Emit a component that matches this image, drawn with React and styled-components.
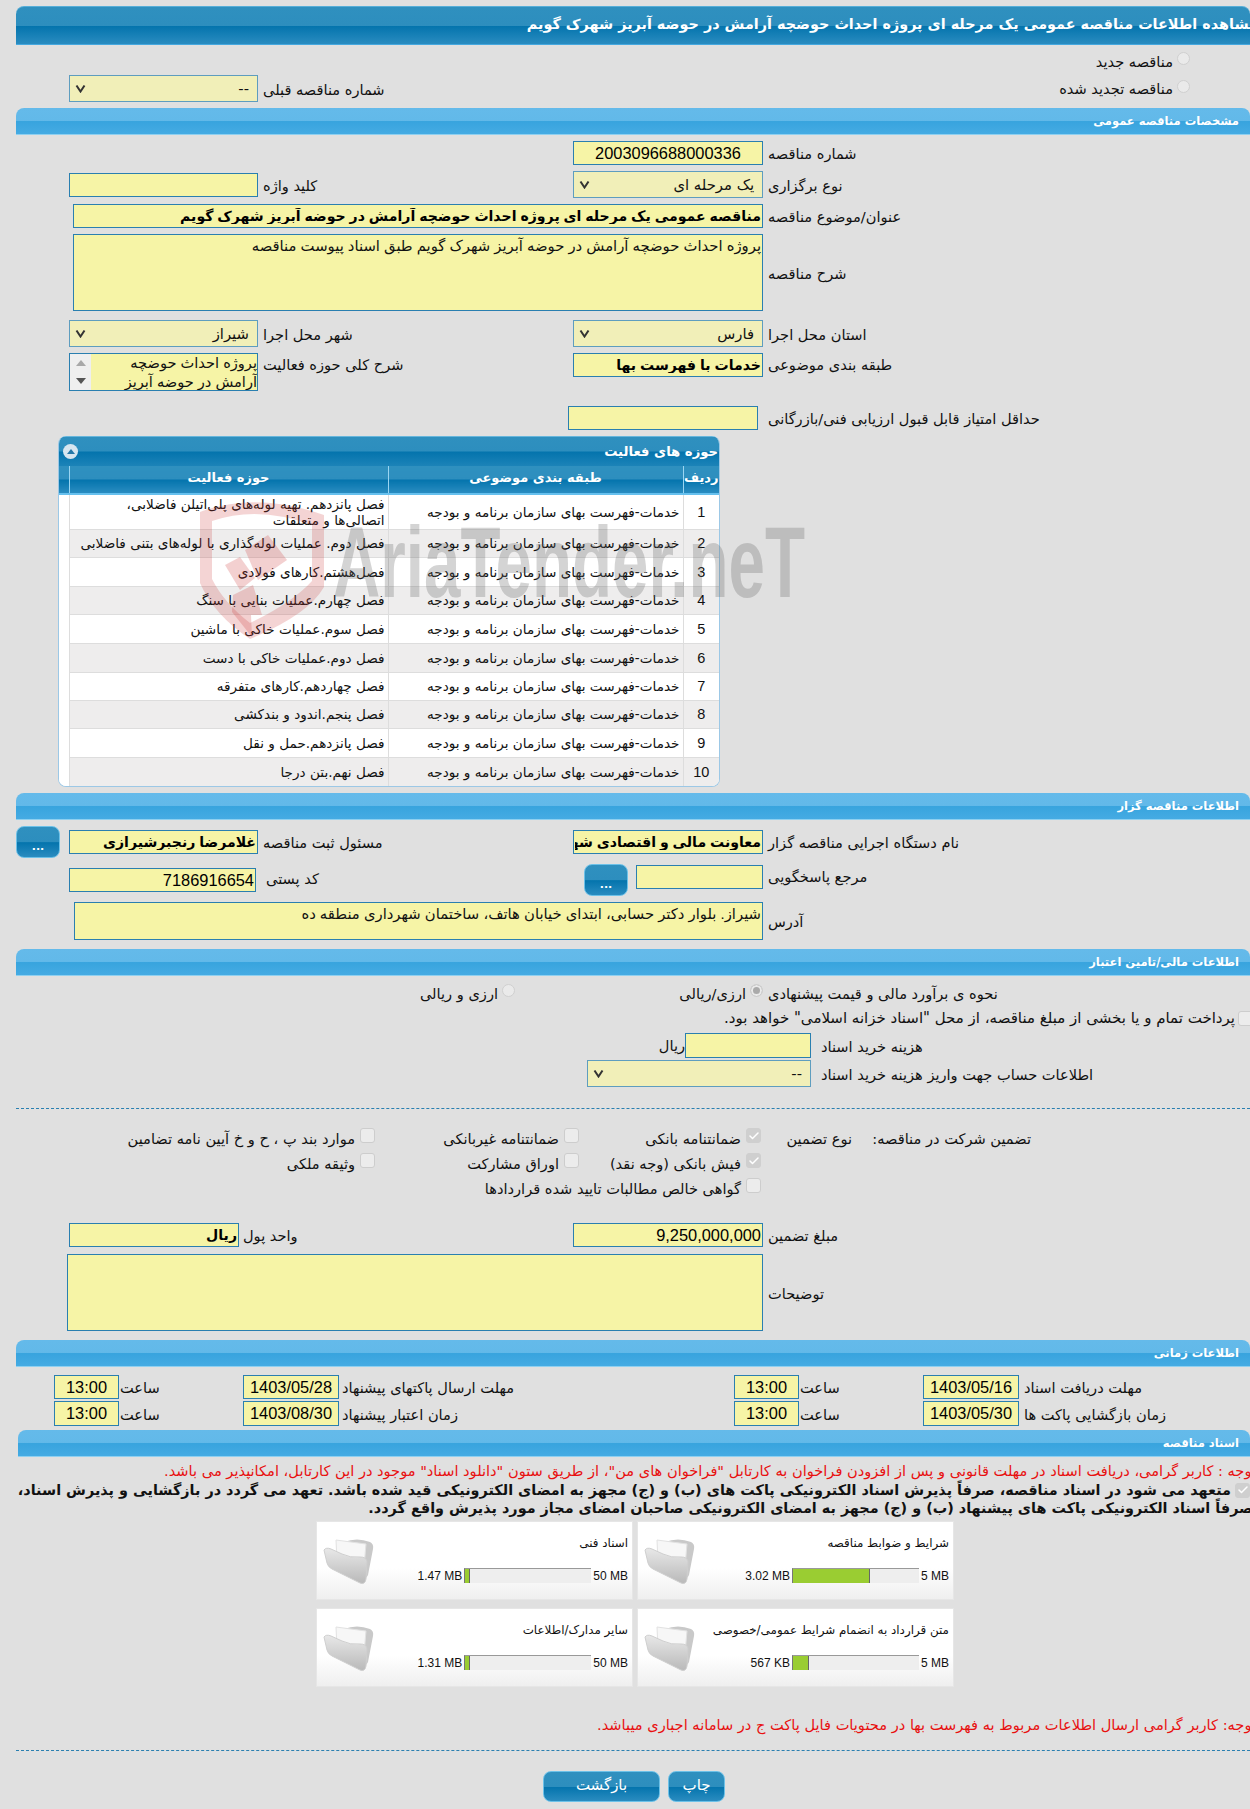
import React from "react";
import styled, { createGlobalStyle } from "styled-components";
import { Check } from "lucide-react";

const GlobalStyle = createGlobalStyle`
  html, body { margin: 0; padding: 0; background: #e0e0e0; }
  body { width: 1250px; height: 1809px; overflow: hidden; font-family: "DejaVu Sans", Tahoma, sans-serif; color: #111; }
  * { box-sizing: border-box; }
`;

const FONT = `"Liberation Sans", "DejaVu Sans", sans-serif`;

const Page = styled.div`
  position: relative; width: 1250px; height: 1809px; padding-left: 16px;
  overflow: hidden; direction: rtl; font-size: 14.6px;
`;
const TitleBar = styled.div`
  margin-top: 6px; height: 39px; display: flex; align-items: center; overflow: hidden; white-space: nowrap;
  border-radius: 8px 8px 0 0; color: #fff; font-weight: bold; font-size: 14.4px; padding-bottom: 3px;
  border-top: 1px solid #56aed8; border-bottom: 1px solid #45a8df;
  background: linear-gradient(#2f90bf 0, #2d8ebe 50%, #0474ad 52%, #2a8cc0 100%);
`;
const TitleText = styled.span` margin-right: -8px; `;
const SectionBar = styled.div`
  margin-top: ${p => p.$mt}px; margin-left: ${p => p.$ml || 0}px; height: 27px; display: flex; align-items: center;
  padding: 0 11px 0 0; border-radius: 8px 8px 0 0; color: #fff; font-weight: bold; font-size: 11.5px;
  border-bottom: 1px solid #8fd0f0;
  background: linear-gradient(#64baea 0, #62b9e9 48%, #38a4de 52%, #45abe3 100%);
`;
const Row = styled.div`
  display: grid; grid-template-columns: ${p => p.$cols || "487px 190px 315px 189px 53px"};
  margin-top: ${p => p.$mt}px; height: ${p => p.$h}px; align-items: ${p => p.$align || "center"};
`;
const Label = styled.label`
  text-align: left; white-space: nowrap; padding-left: ${p => p.$pl ?? 5}px; padding-top: ${p => p.$pt ?? 1}px;
`;
const Input = styled.input`
  display: block; width: ${p => p.$w}px; height: ${p => p.$hh || 24}px; margin-right: ${p => p.$mr || 0}px; margin-top: ${p => p.$mtop || 0}px; padding: 0 1px;
  background: #f6f4a6; border: 1px solid #2a7fb0; color: #000; outline: none; direction: rtl;
  font: ${p => (p.$bold ? "bold" : "normal")} ${p => p.$fs || 16.4}px ${FONT};
  text-align: ${p => p.$center ? "center" : "right"};
  grid-column: ${p => p.$span ? `2 / span ${p.$span}` : "auto"};
`;
const Area = styled.textarea`
  display: block; width: ${p => p.$w}px; height: ${p => p.$hh}px; padding: 2px 1px 0; resize: none; overflow: hidden;
  background: #f6f4a6; border: 1px solid #2a7fb0; color: #111; outline: none; direction: rtl;
  font: 14.8px ${FONT};
  grid-column: 2 / span 4;
`;
const Select = styled.div`
  display: flex; justify-content: space-between; align-items: center; height: 27px; width: ${p => p.$w || 190}px;
  padding: 0 8px 0 5px; background: #f1efb8; border: 1px solid #5e9dbf; font-size: 14.8px;
`;
const Arrow = () => (
  <svg width="11" height="9" viewBox="0 0 11 9"><path d="M1.5 1.5 L5.5 7.5 L9.5 1.5" fill="none" stroke="#333" strokeWidth="2" /></svg>
);
const RadioCell = styled.div`
  display: flex; align-items: center; gap: 4px; padding-right: ${p => p.$pr || 0}px; white-space: nowrap;
`;
const Radio = styled.span`
  display: inline-block; flex: none; width: 13px; height: 13px; margin-bottom: 5px; border-radius: 50%; border: 1px solid #d0d0d0; background: #eaeaea;
  ${p => p.$on && "box-shadow: inset 0 0 0 2px #eaeaea; background: #aaa;"}
`;
const Box = styled.span`
  display: inline-flex; flex: none; align-items: center; justify-content: center; width: 15px; height: 15px;
  border-radius: 3px; background: ${p => p.$on ? "#cfcfcf" : "#ececec"}; border: 1px solid ${p => p.$on ? "#cfcfcf" : "#cdcdcd"};
`;
const Listbox = styled.div`
  display: flex; width: 189px; height: 38px; border: 1px solid #2a7fb0; background: #f6f4a6; overflow: hidden;
`;
const ListText = styled.div` flex: 1; font: 14.6px/19px ${FONT}; white-space: pre-line; color: #111; `;
const ScrollTrack = styled.div`
  flex: none; width: 21px; background: #efefef; display: flex; flex-direction: column; align-items: center; justify-content: space-around;
`;
const Tri = styled.span`
  width: 0; height: 0; border-left: 5px solid transparent; border-right: 5px solid transparent;
  ${p => p.$up ? "border-bottom: 6px solid #a8a8a8;" : "border-top: 6px solid #555;"}
`;
const glossy = `
  background: linear-gradient(#2f90bf 0, #2d8ebe 50%, #0474ad 52%, #2a8cc0 100%);
  border: 1px solid #6cc1e8; border-radius: 8px; color: #fff; font-family: "DejaVu Sans", sans-serif;
`;
const DotsButton = styled.button`
  ${glossy} width: 44px; height: 32px; padding: 8px 0 0; font-size: 11px; font-weight: bold; justify-self: end;
`;
const InlineGroup = styled.div` display: flex; gap: 8px; align-items: ${p => p.$align || "flex-start"}; `;
const Panel = styled.section`
  margin: 6px 530px 0 0; width: 662px; height: 351px;
  border: 1px solid #9cc8e6; border-top: 0; border-radius: 8px; overflow: hidden; background: #fff;
`;
const PanelTitle = styled.div`
  display: flex; justify-content: space-between; align-items: center; height: 30px; padding: 0 1px 0 4px; color: #fff; font-weight: bold; font-size: 13.2px;
  background: linear-gradient(#2f90bf 0, #2d8ebe 48%, #0474ad 52%, #1c83b8 100%);
  border-top: 1px solid #67b6dc;
`;
const Collapse = styled.span`
  width: 15px; height: 15px; border-radius: 50%; background: #d7e6f0; display: flex; align-items: center; justify-content: center;
  &::after { content: ""; border-left: 4px solid transparent; border-right: 4px solid transparent; border-bottom: 5px solid #2578a8; }
`;
const Table = styled.table`
  width: 660px; border-collapse: collapse; table-layout: fixed;
`;
const Th = styled.th`
  width: ${p => p.$w}px; height: 28px; padding: 0 0 4px; color: #fff; font-size: 13px; border-left: 1px solid #9ad5f2;
  background: linear-gradient(#2f90bf 0, #2d8ebe 48%, #0474ad 52%, #2a8cc0 100%); border-bottom: 2px solid #66c0ee;
  &:last-child { border-left: 0; }
`;
const Tr = styled.tr`
  height: ${p => p.$h}px;
  & > td { background: ${p => p.$alt ? "#eeeded" : "#fff"}; }
  & > td:last-child { background: #fff; border: 0; }
`;
const Td = styled.td`
  padding: 0 3px; border-left: 1px solid #ddd; border-bottom: 1px solid #ddd; line-height: 16px; white-space: pre-line;
  text-align: ${p => p.$center ? "center" : "right"};
  font-family: ${p => p.$center ? FONT : "inherit"}; font-size: ${p => p.$center ? "14.5px" : "13.6px"};
`;
const TextRow = styled.div`
  margin-top: ${p => p.$mt}px; height: ${p => p.$h}px; display: flex; align-items: center; gap: ${p => p.$gap || 0}px;
  margin-right: ${p => p.$mr || 0}px; white-space: nowrap; font-size: ${p => p.$fs || 14.6}px;
  color: ${p => p.$color || "inherit"}; font-weight: ${p => p.$bold ? "bold" : "normal"};
`;
const Divider = styled.div`
  margin-top: ${p => p.$mt}px; height: 1px; border-top: 1px dashed #2a7fb0;
`;
const CheckItem = styled.div`
  display: flex; align-items: flex-start; gap: 5px; white-space: nowrap;
`;
const CheckText = styled.span` padding-top: 2px; padding-right: ${p => p.$pr || 0}px; white-space: nowrap; `;
const Cards = styled.div`
  margin: 4px 296px 0 0; width: 638px; display: grid; grid-template-columns: 317px 317px; grid-auto-rows: 79px; gap: 8px 4px;
`;
const Card = styled.div`
  display: flex; justify-content: space-between; padding: 0 4px 0 3px; background: linear-gradient(#fff 0, #fff 60%, #efefef 100%);
  border: 1px solid #e6e6e6; font-size: 11.9px;
`;
const CardBody = styled.div` flex: 1; `;
const CardTitle = styled.div` margin-top: 14px; height: 18px; white-space: nowrap; `;
const Meter = styled.div`
  margin-top: 14px; display: flex; align-items: center; gap: 2px; justify-content: flex-start; font: 12px ${FONT}; white-space: nowrap;
`;
const Amount = styled.span` direction: ltr; unicode-bidi: isolate; `;
const Track = styled.div`
  width: 127px; height: 15px; flex: none; background: #eee; border-top: 1px solid #999; direction: ltr;
  border-left: 1px solid #777; display: flex;
`;
const Fill = styled.div`
  height: 100%; background: #9acd32; border-right: 1px solid #666;
`;
const FolderWrap = styled.div` flex: none; width: 56px; padding-top: 15px; `;
const Folder = () => (
  <svg width="54" height="48" viewBox="0 0 54 48">
    <defs>
      <linearGradient id="fg" x1="0" y1="0" x2="0" y2="1"><stop offset="0" stopColor="#e8e8e8" /><stop offset="1" stopColor="#b9b9b9" /></linearGradient>
    </defs>
    <path d="M22 5 Q35 0 48 5 Q52 7 51 12 L46 38 Q44 43 41 40 Z" fill="#c9c9c9" />
    <path d="M14 3 L44 7 L42 30 L15 24 Z" fill="#f7f7f7" stroke="#e2e2e2" />
    <path d="M2 13 Q4 10 9 12 L20 17 Q28 21 38 20 Q44 20 45 24 L44 42 Q43 48 38 46 L10 32 Q6 30 5 26 Z" fill="url(#fg)" stroke="#cfcfcf" />
  </svg>
);
const Actions = styled.div`
  margin-top: 20px; display: flex; gap: 8px; padding-right: 525px;
`;
const ActionButton = styled.button`
  ${glossy} width: ${p => p.$w}px; height: 31px; font-size: 15px; padding: 0 0 3px;
`;
const WatermarkText = styled.div`
  position: absolute; left: 333px; top: 512px; direction: ltr; color: rgba(95, 95, 95, 0.27);
  font: bold 100px/100px ${FONT}; transform-origin: left top; transform: scaleX(0.655); white-space: nowrap; pointer-events: none;
`;
const WatermarkLogo = styled.svg`
  position: absolute; left: 196px; top: 497px; pointer-events: none;
`;
const Unit = styled.span` margin-right: -8px; `;

const rowsData = [
  ["فصل پانزدهم. تهیه لوله‌های پلی‌اتیلن فاضلابی،\nاتصالی‌ها و متعلقات", 35],
  ["فصل دوم. عملیات لوله‌گذاری با لوله‌های بتنی فاضلابی", 28],
  ["فصل‌هشتم.کارهای فولادی", 29],
  ["فصل چهارم.عملیات بنایی با سنگ", 28],
  ["فصل سوم.عملیات خاکی با ماشین", 29],
  ["فصل دوم.عملیات خاکی با دست", 29],
  ["فصل چهاردهم.کارهای متفرقه", 28],
  ["فصل پنجم.اندود و بندکشی", 28],
  ["فصل پانزدهم.حمل و نقل", 29],
  ["فصل نهم.بتن درجا", 29],
];
const CATEGORY = "خدمات-فهرست بهای سازمان برنامه و بودجه";

const docs = [
  ["شرایط و ضوابط مناقصه", "3.02 MB", "5 MB", 61],
  ["اسناد فنی", "1.47 MB", "50 MB", 4],
  ["متن قرارداد به انضمام شرایط عمومی/خصوصی", "567 KB", "5 MB", 13],
  ["سایر مدارک/اطلاعات", "1.31 MB", "50 MB", 4],
];

const CheckField = ({ on, children }) => (
  <CheckItem>
    <Box $on={on}>{on && <Check size={12} color="#fff" strokeWidth={3} />}</Box>
    <CheckText>{children}</CheckText>
  </CheckItem>
);

const TIME_COLS = "231px 96px 124px 65px 395px 96px 124px 65px 38px";
const GUARANTEE_COLS = "398px 91px 182px 204px 359px";

export default function App() {
  return (
    <Page>
      <GlobalStyle />
      <TitleBar><TitleText>مشاهده اطلاعات مناقصه عمومی یک مرحله ای پروژه احداث حوضچه آرامش در حوضه آبریز شهرک گویم</TitleText></TitleBar>

      <Row $mt={7} $h={16}>
        <RadioCell $pr={60}><Radio />مناقصه جدید</RadioCell>
      </Row>
      <Row $mt={7} $h={27}>
        <RadioCell $pr={60}><Radio />مناقصه تجدید شده</RadioCell>
        <span />
        <Label>شماره مناقصه قبلی</Label>
        <Select $w={189}>--<Arrow /></Select>
      </Row>

      <SectionBar $mt={6}>مشخصات مناقصه عمومی</SectionBar>
      <Row $mt={6} $h={24}>
        <Label>شماره مناقصه</Label>
        <Input readOnly $w={190} $center value="2003096688000336" />
      </Row>
      <Row $mt={6} $h={27}>
        <Label>نوع برگزاری</Label>
        <Select>یک مرحله ای<Arrow /></Select>
        <Label>کلید واژه</Label>
        <Input readOnly $w={189} value="" />
      </Row>
      <Row $mt={6} $h={24}>
        <Label>عنوان/موضوع مناقصه</Label>
        <Input readOnly $w={690} $bold $fs={14.1} $span={4} value="مناقصه عمومی یک مرحله ای پروژه احداث حوضچه آرامش در حوضه آبریز شهرک گویم" />
      </Row>
      <Row $mt={6} $h={77}>
        <Label>شرح مناقصه</Label>
        <Area readOnly $w={690} $hh={77} value="پروژه احداث حوضچه آرامش در حوضه آبریز شهرک گویم طبق اسناد پیوست مناقصه" />
      </Row>
      <Row $mt={9} $h={27}>
        <Label>استان محل اجرا</Label>
        <Select>فارس<Arrow /></Select>
        <Label>شهر محل اجرا</Label>
        <Select $w={189}>شیراز<Arrow /></Select>
      </Row>
      <Row $mt={6} $h={38} $align="start">
        <Label $pt={3}>طبقه بندی موضوعی</Label>
        <Input readOnly $w={190} $bold $fs={14.1} value="خدمات با فهرست بها" />
        <Label $pt={3}>شرح کلی حوزه فعالیت</Label>
        <Listbox>
          <ListText>{"پروژه احداث حوضچه\nآرامش در حوضه آبریز"}</ListText>
          <ScrollTrack><Tri $up /><Tri /></ScrollTrack>
        </Listbox>
      </Row>
      <Row $mt={15} $h={24}>
        <Label>حداقل امتیاز قابل قبول ارزیابی فنی/بازرگانی</Label>
        <Input readOnly $w={190} $mr={5} value="" />
      </Row>

      <Panel>
        <PanelTitle>حوزه های فعالیت<Collapse /></PanelTitle>
        <Table>
          <thead>
            <tr>
              <Th $w={36}>ردیف</Th>
              <Th $w={295}>طبقه بندی موضوعی</Th>
              <Th $w={319}>حوزه فعالیت</Th>
              <Th $w={10} />
            </tr>
          </thead>
          <tbody>
            {rowsData.map(([t, h], i) => (
              <Tr key={i} $h={h} $alt={i % 2 === 1}>
                <Td $center>{i + 1}</Td>
                <Td>{CATEGORY}</Td>
                <Td>{t}</Td>
                <Td />
              </Tr>
            ))}
          </tbody>
        </Table>
      </Panel>

      <SectionBar $mt={6}>اطلاعات مناقصه گزار</SectionBar>
      <Row $mt={6} $h={32}>
        <Label>نام دستگاه اجرایی مناقصه گزار</Label>
        <Input readOnly $w={190} $bold $fs={14.1} value="معاونت مالی و اقتصادی شهرداری شیراز" />
        <Label>مسئول ثبت مناقصه</Label>
        <Input readOnly $w={189} $bold $fs={14.1} value="غلامرضا رنجبرشیرازی" />
        <DotsButton>...</DotsButton>
      </Row>
      <Row $mt={6} $h={32} $align="start">
        <Label $pt={4}>مرجع پاسخگویی</Label>
        <InlineGroup>
          <Input readOnly $w={127} $mtop={1} value="" />
          <DotsButton>...</DotsButton>
        </InlineGroup>
        <Label $pl={8} $pt={6}>کد پستی</Label>
        <Input readOnly $w={187} $mr={2} $mtop={4} value="7186916654" />
      </Row>
      <Row $mt={6} $h={38}>
        <Label>آدرس</Label>
        <Area readOnly $w={689} $hh={38} value="شیراز. بلوار دکتر حسابی، ابتدای خیابان هاتف، ساختمان شهرداری منطقه ده" />
      </Row>

      <SectionBar $mt={9}>اطلاعات مالی/تامین اعتبار</SectionBar>
      <Row $mt={7} $h={20} $cols="487px 248px 499px">
        <Label>نحوه ی برآورد مالی و قیمت پیشنهادی</Label>
        <RadioCell><Radio $on />ارزی/ریالی</RadioCell>
        <RadioCell><Radio />ارزی و ریالی</RadioCell>
      </Row>
      <TextRow $mt={5} $h={20} $gap={3} $mr={-3} $fs={15}>
        <Box />پرداخت تمام و یا بخشی از مبلغ مناقصه، از محل "اسناد خزانه اسلامی" خواهد بود.
      </TextRow>
      <Row $mt={5} $h={25} $cols="439px 224px 571px">
        <Label $pl={10}>هزینه خرید اسناد</Label>
        <InlineGroup $align="center">
          <Input readOnly $w={126} $hh={25} value="" />
          <Unit>ریال</Unit>
        </InlineGroup>
      </Row>
      <Row $mt={2} $h={26} $cols="439px 224px 571px">
        <Label $pl={10}>اطلاعات حساب جهت واریز هزینه خرید اسناد</Label>
        <Select $w={224}>--<Arrow /></Select>
      </Row>
      <Divider $mt={22} />

      <Row $mt={19} $h={25} $cols={GUARANTEE_COLS} $align="start">
        <CheckText $pr={219}>تضمین شرکت در مناقصه:</CheckText>
        <CheckText>نوع تضمین</CheckText>
        <CheckField on>ضمانتنامه بانکی</CheckField>
        <CheckField>ضمانتنامه غیربانکی</CheckField>
        <CheckField>موارد بند پ ، ح و خ آیین نامه تضامین</CheckField>
      </Row>
      <Row $mt={0} $h={25} $cols={GUARANTEE_COLS} $align="start">
        <span /><span />
        <CheckField on>فیش بانکی (وجه نقد)</CheckField>
        <CheckField>اوراق مشارکت</CheckField>
        <CheckField>وثیقه ملکی</CheckField>
      </Row>
      <Row $mt={0} $h={25} $cols={GUARANTEE_COLS} $align="start">
        <span /><span />
        <CheckField>گواهی خالص مطالبات تایید شده قراردادها</CheckField>
      </Row>

      <Row $mt={20} $h={24} $cols="487px 190px 330px 174px 53px">
        <Label>مبلغ تضمین</Label>
        <Input readOnly $w={190} value="9,250,000,000" />
        <Label $pl={0}>واحد پول</Label>
        <Input readOnly $w={170} $mr={4} $bold $fs={14.1} value="ریال" />
      </Row>
      <Row $mt={7} $h={77}>
        <Label>توضیحات</Label>
        <Area readOnly $w={696} $hh={77} value="" />
      </Row>

      <SectionBar $mt={9}>اطلاعات زمانی</SectionBar>
      <Row $mt={8} $h={24} $cols={TIME_COLS}>
        <Label>مهلت دریافت اسناد</Label>
        <Input readOnly $w={96} $center value="1403/05/16" />
        <Label $pl={1}>ساعت</Label>
        <Input readOnly $w={65} $center value="13:00" />
        <Label $pl={3}>مهلت ارسال پاکتهای پیشنهاد</Label>
        <Input readOnly $w={96} $center value="1403/05/28" />
        <Label $pl={1}>ساعت</Label>
        <Input readOnly $w={65} $center value="13:00" />
      </Row>
      <Row $mt={2} $h={25} $cols={TIME_COLS}>
        <Label>زمان بازگشایی پاکت ها</Label>
        <Input readOnly $w={96} $hh={25} $center value="1403/05/30" />
        <Label $pl={1}>ساعت</Label>
        <Input readOnly $w={65} $hh={25} $center value="13:00" />
        <Label $pl={3}>زمان اعتبار پیشنهاد</Label>
        <Input readOnly $w={96} $hh={25} $center value="1403/08/30" />
        <Label $pl={1}>ساعت</Label>
        <Input readOnly $w={65} $hh={25} $center value="13:00" />
      </Row>

      <SectionBar $mt={4} $ml={2}>اسناد مناقصه</SectionBar>
      <TextRow $mt={3} $h={20} $color="#e81010" $mr={-6}>
        توجه : کاربر گرامی، دریافت اسناد در مهلت قانونی و پس از افزودن فراخوان به کارتابل "فراخوان های من"، از طریق ستون "دانلود اسناد" موجود در این کارتابل، امکانپذیر می باشد.
      </TextRow>
      <TextRow $mt={1} $h={18} $bold $gap={4} $fs={14.4}>
        <Box $on><Check size={12} color="#fff" strokeWidth={3} /></Box>
        متعهد می شود در اسناد مناقصه، صرفاً پذیرش اسناد الکترونیکی پاکت های (ب) و (ج) مجهز به امضای الکترونیکی قید شده باشد. تعهد می گردد در بازگشایی و پذیرش اسناد،
      </TextRow>
      <TextRow $mt={0} $h={18} $bold $mr={-3} $fs={14.4}>
        صرفاً اسناد الکترونیکی پاکت های پیشنهاد (ب) و (ج) مجهز به امضای الکترونیکی صاحبان امضای مجاز مورد پذیرش واقع گردد.
      </TextRow>

      <Cards>
        {docs.map(([title, used, max, pct]) => (
          <Card key={title}>
            <CardBody>
              <CardTitle>{title}</CardTitle>
              <Meter>
                <Amount>{max}</Amount>
                <Track><Fill style={{ width: `${pct}%` }} /></Track>
                <Amount>{used}</Amount>
              </Meter>
            </CardBody>
            <FolderWrap><Folder /></FolderWrap>
          </Card>
        ))}
      </Cards>

      <TextRow $mt={27} $h={20} $color="#e81010" $mr={-6}>
        توجه: کاربر گرامی ارسال اطلاعات مربوط به فهرست بها در محتویات فایل پاکت ج در سامانه اجباری میباشد.
      </TextRow>
      <Divider $mt={16} />
      <Actions>
        <ActionButton $w={57}>چاپ</ActionButton>
        <ActionButton $w={117}>بازگشت</ActionButton>
      </Actions>

      <WatermarkLogo width="134" height="146" viewBox="0 0 134 146">
        <path d="M4 15 Q60 -6 128 18 L128 90 Q112 118 54 142 Q18 118 4 86 Z M16 24 L16 82 Q28 106 54 126 Q96 106 116 84 L116 28 Q62 8 16 24 Z" fill="rgba(205,60,60,0.22)" fillRule="evenodd" />
        <path d="M49 53 L72 38 L91 63 L62 83 Z" fill="rgba(205,60,60,0.24)" />
        <path d="M29 68 L44 60 L59 81 L44 93 Z" fill="rgba(205,60,60,0.24)" />
        <path d="M37 98 L57 88 L66 118 L55 118 L56 140 L36 115 Z" fill="rgba(205,60,60,0.24)" />
      </WatermarkLogo>
      <WatermarkText>AriaTender.neT</WatermarkText>
    </Page>
  );
}
